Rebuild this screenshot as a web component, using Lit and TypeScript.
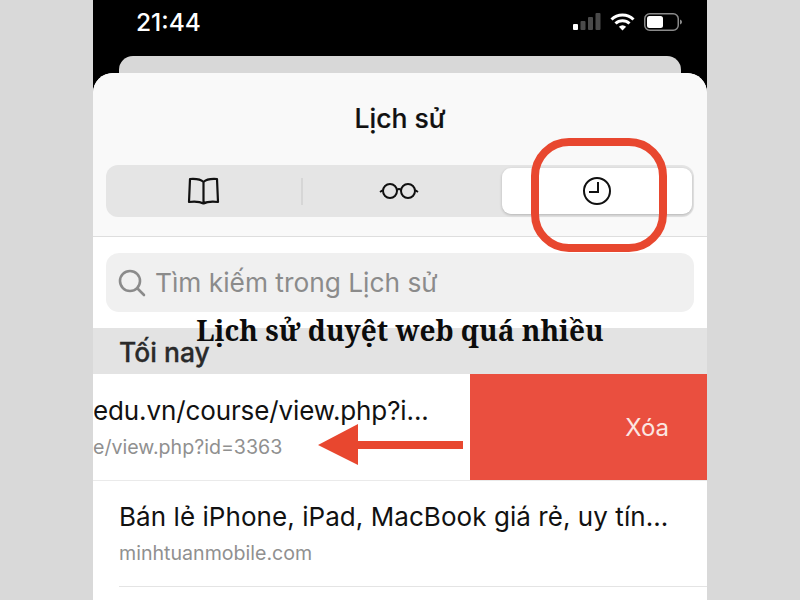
import { LitElement, html, css } from "lit";
import { customElement } from "lit/decorators.js";

@customElement("app-root")
export class AppRoot extends LitElement {
  static styles = css`
    :host { display: block; width: 800px; height: 600px; background: #d9d9d9; overflow: hidden; font-family: Inter, "Liberation Sans", sans-serif; }
    .phone { position: relative; width: 614px; height: 600px; margin: 0 auto; background: #000; overflow: hidden; display: flex; flex-direction: column; }
    .status { height: 56px; flex: none; display: flex; align-items: center; justify-content: space-between; padding: 0 25px 12px 43px; box-sizing: border-box; color: #fff; }
    .time { font-size: 24.5px; font-weight: 500; }
    .indicators { display: flex; align-items: center; gap: 9px; }
    .back { height: 30px; margin: 0 26px; flex: none; background: #d8d8d8; border-radius: 14px 14px 0 0; }
    .sheet { flex: 1; margin-top: -13px; position: relative; background: #fff; border-radius: 20px 20px 0 0; overflow: hidden; display: flex; flex-direction: column; }
    .top { height: 164px; flex: none; box-sizing: border-box; background: #f9f9f9; border-bottom: 1px solid #dedede; padding: 26px 13px 0; display: flex; flex-direction: column; }
    .title { font-size: 26.5px; line-height: 38px; font-weight: 500; text-align: center; color: #111; -webkit-text-stroke: 0.2px #111; }
    .seg { margin-top: 28px; height: 52px; background: #e5e5e5; border-radius: 12px; display: grid; grid-template-columns: 197px 1fr 192px; align-items: center; position: relative; }
    .cell { display: flex; align-items: center; justify-content: center; height: 100%; }
    .cell.mid { padding-right: 7px; }
    .cell.sep { border-right: 2px solid #d6d6d6; height: 27px; }
    .cell.active { background: #fff; height: 46px; margin-right: 2px; border-radius: 9px; box-shadow: 0 1px 3px rgba(0,0,0,.22); }
    .search-wrap { height: 91px; flex: none; box-sizing: border-box; padding: 16px 13px 0; background: #fff; }
    .search { height: 59px; border-radius: 13px; background: #f0f0f0; display: flex; align-items: center; gap: 9px; padding: 0 12px; box-sizing: border-box; color: #8b8b8b; font-size: 26.3px; }
    .section { height: 46px; flex: none; background: #e3e3e3; box-sizing: border-box; padding: 6px 26px 0; font-size: 26.5px; line-height: 36px; font-weight: 500; color: #2a2a2a; -webkit-text-stroke: 0.3px #2a2a2a; }
    .row1 { height: 106px; flex: none; display: flex; background: #fff; }
    .row1 .left { width: 377px; flex: none; box-sizing: border-box; padding-top: 18px; overflow: hidden; white-space: nowrap; }
    .row1 .row-title { letter-spacing: -0.12px; }
    .row-title { font-size: 26px; line-height: 38px; color: #111; }
    .row-sub { font-size: 19.6px; line-height: 26px; margin-top: 4px; color: #909090; }
    .del { flex: 1; background: #ea4f3f; color: #fbe6e2; font-size: 24px; display: flex; align-items: center; justify-content: flex-end; padding-right: 38px; }
    .row2 { height: 106px; flex: none; box-sizing: border-box; margin-left: 26px; padding-top: 17px; border-bottom: 1px solid #e4e4e4; white-space: nowrap; }
    .row2 .row-title { letter-spacing: 0.06px; }
    .row2-outer { background: #fff; border-top: 1px solid #eaeaea; }
    .caption { position: absolute; left: 0; right: 0; top: 311px; text-align: center; font-family: "Noto Serif", "DejaVu Serif", "Liberation Serif", serif; font-size: 28px; line-height: 38px; font-weight: 700; color: #0c0c0c; }
    .mark { position: absolute; left: 0; top: 0; pointer-events: none; }
  `;

  render() {
    return html`
      <div class="phone">
        <div class="status">
          <span class="time">21:44</span>
          <div class="indicators">
            <svg width="28" height="18" viewBox="0 0 28 18">
              <rect x="0" y="11" width="5" height="6" rx="1" fill="#fff"/>
              <rect x="7.5" y="8" width="5" height="9" rx="1" fill="#4a4a4a"/>
              <rect x="15" y="4" width="5" height="13" rx="1" fill="#4a4a4a"/>
              <rect x="22.5" y="0" width="5" height="17" rx="1" fill="#4a4a4a"/>
            </svg>
            <svg width="25" height="18" viewBox="0 0 25 18" fill="none" stroke="#fff" stroke-width="3">
              <path d="M1.5 6.5a15.5 15.5 0 0 1 22 0"/>
              <path d="M5.5 10.5a10 10 0 0 1 14 0"/>
              <path d="M12.5 17.5l-3.6-3.8a5 5 0 0 1 7.2 0z" fill="#fff" stroke="none"/>
            </svg>
            <svg width="38" height="18" viewBox="0 0 38 18" fill="none">
              <rect x="0.75" y="0.75" width="33.5" height="16.5" rx="5" stroke="#8a8a8a" stroke-width="1.5"/>
              <rect x="3" y="3" width="16" height="12" rx="2.5" fill="#fff"/>
              <path d="M36 6.5c1.3.5 2 1.4 2 2.5s-.7 2-2 2.5z" fill="#8a8a8a"/>
            </svg>
          </div>
        </div>
        <div class="back"></div>
        <div class="sheet">
          <div class="top">
            <div class="title">Lịch sử</div>
            <div class="seg">
              <div class="cell sep">
                <svg width="33" height="28" viewBox="0 0 33 28" fill="none" stroke="#111" stroke-width="2.2" stroke-linejoin="round" stroke-linecap="round">
                  <path d="M16.5 5C14 2.5 10 1.5 3 2L2 25c6-.6 11-.4 14.500 1.500C20 24.600 25 24.400 31 25L30 2C23 1.500 19 2.500 16.500 5zV26"/>
                </svg>
              </div>
              <div class="cell mid">
                <svg width="40" height="18" viewBox="0 0 40 18" fill="none" stroke="#111" stroke-width="2">
                  <circle cx="11" cy="9" r="7"/>
                  <circle cx="29" cy="9" r="7"/>
                  <path d="M18 8q2-2 4 0M4 8L1 10M36 8l3 2"/>
                </svg>
              </div>
              <div class="cell active">
                <svg width="30" height="30" viewBox="0 0 30 30" fill="none" stroke="#111" stroke-width="2">
                  <circle cx="15" cy="15" r="13"/>
                  <path d="M16 6v10H7"/>
                </svg>
              </div>
            </div>
          </div>
          <div class="search-wrap">
            <div class="search">
              <svg width="28" height="28" viewBox="0 0 28 28" fill="none" stroke="#8b8b8b" stroke-width="2.6" stroke-linecap="round">
                <circle cx="12" cy="12" r="10"/>
                <path d="M19.500 19.500L26 26"/>
              </svg>
              <span>Tìm kiếm trong Lịch sử</span>
            </div>
          </div>
          <div class="section">Tối nay</div>
          <div class="row1">
            <div class="left">
              <div class="row-title">edu.vn/course/view.php?i...</div>
              <div class="row-sub">e/view.php?id=3363</div>
            </div>
            <div class="del">Xóa</div>
          </div>
          <div class="row2-outer">
            <div class="row2">
              <div class="row-title">Bán lẻ iPhone, iPad, MacBook giá rẻ, uy tín...</div>
              <div class="row-sub">minhtuanmobile.com</div>
            </div>
          </div>
        </div>
        <div class="caption">Lịch sử duyệt web quá nhiều</div>
        <svg class="mark" width="614" height="600" viewBox="0 0 614 600" fill="none">
          <rect x="442" y="142" width="128" height="106" rx="34" stroke="#e8472f" stroke-width="8"/>
          <path d="M225 445L265 424V441H370V449H265V465z" fill="#e8472f"/>
        </svg>
      </div>
    `;
  }
}
